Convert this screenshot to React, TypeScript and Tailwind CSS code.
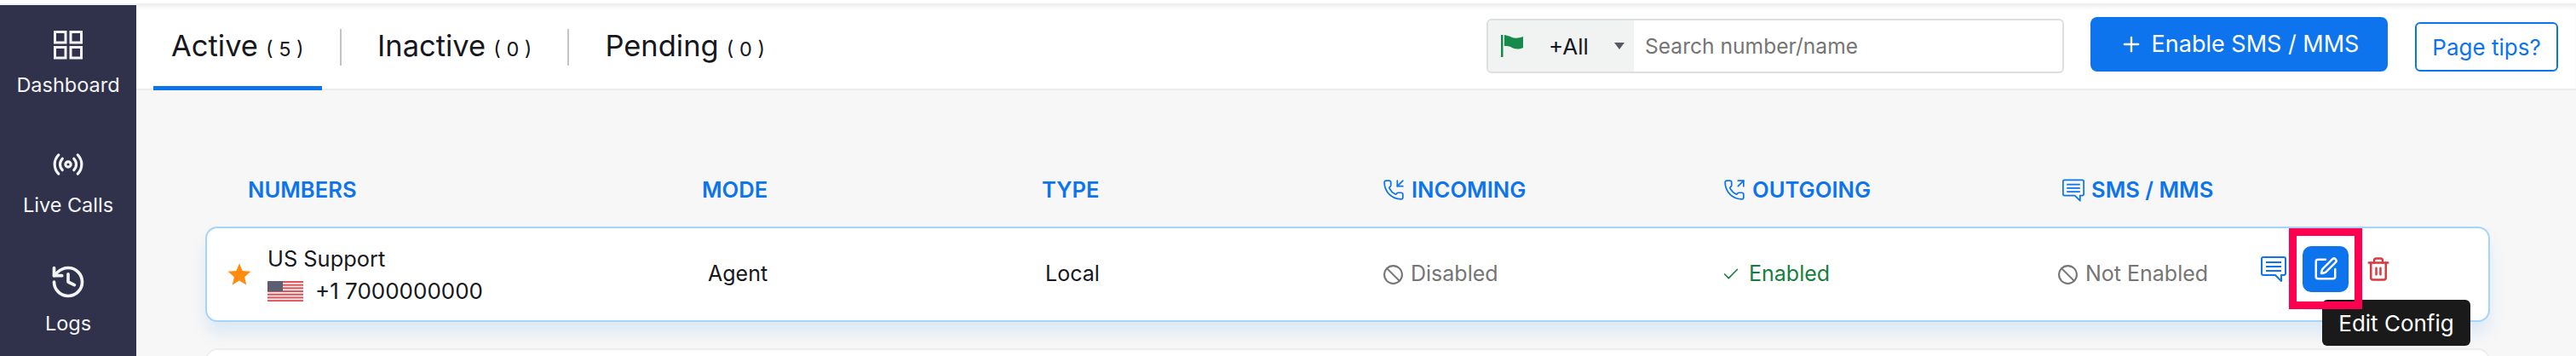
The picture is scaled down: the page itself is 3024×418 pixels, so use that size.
import { Ban, Check, History, PhoneIncoming, PhoneOutgoing, Plus, Radio, SquarePen, Trash2 } from "lucide-react";

function GridIcon() {
  return (
    <svg width="34" height="34" viewBox="0 0 34 34" fill="none" stroke="currentColor" strokeWidth="3">
      <rect x="1.5" y="1.5" width="12.5" height="12.5" />
      <rect x="20" y="1.5" width="12.5" height="12.5" />
      <rect x="1.5" y="19.5" width="12.5" height="12.5" />
      <rect x="20" y="19.5" width="12.5" height="12.5" />
    </svg>
  );
}

function ChatIcon({ className }: { className?: string }) {
  return (
    <svg className={className} viewBox="0 0 30 30" fill="none" stroke="currentColor" strokeWidth="2" strokeLinejoin="round">
      <path d="M3 1h24a2 2 0 0 1 2 2v17a2 2 0 0 1-2 2h-3v7l-7-7H3a2 2 0 0 1-2-2V3a2 2 0 0 1 2-2Z" />
      <path d="M6 7h18M6 12h18M6 17h18" />
    </svg>
  );
}

function GreenFlag() {
  return (
    <svg width="26" height="26" viewBox="0 0 26 26" fill="#168a4b">
      <rect x="0" y="0" width="2.5" height="26" />
      <path d="M4 0c3 1 6 1 9 3 3 1 8 1 13-1v13c-5 2-9 2-13 0-3-2-6-2-9-2Z" />
    </svg>
  );
}

function UsFlag() {
  const stripes = [0, 1, 2, 3, 4, 5, 6];
  return (
    <svg width="42" height="24" viewBox="0 0 42 24">
      <rect width="42" height="24" fill="#f1eeee" />
      {stripes.map((i) => (
        <rect key={i} y={i * 3.7} width="42" height="1.9" fill="#dc4f55" />
      ))}
      <rect width="18" height="12" fill="#5d5f70" />
    </svg>
  );
}

function NavItem({ icon, label, className }: { icon: React.ReactNode; label: string; className: string }) {
  return (
    <div className={`flex flex-col items-center ${className}`}>
      {icon}
      <span className="text-[23.5px] leading-[28px] text-[#f4f4f6]">{label}</span>
    </div>
  );
}

function Tab({ label, count }: { label: string; count: number }) {
  return (
    <span className="flex items-baseline gap-[9px] text-[#16181d]">
      <span className="text-[34.5px] leading-[40px]">{label}</span>
      <span className="text-[23.5px] leading-[40px] whitespace-pre">{`( ${count} )`}</span>
    </span>
  );
}

function HeadLabel({ icon, label, className }: { icon?: React.ReactNode; label: string; className?: string }) {
  return (
    <div className={`flex items-center gap-[8px] ${className}`}>
      {icon}
      <span className="text-[25.6px] leading-[30px] font-semibold text-[#0d74ed]">{label}</span>
    </div>
  );
}

export default function App() {
  return (
    <div className="h-[418px] w-[3024px] overflow-hidden bg-white pt-[4px] font-[Inter,sans-serif]">
      <div className="flex h-[414px] bg-white shadow-[inset_0_6px_6px_-3px_rgba(0,0,0,0.09)]">
        <aside className="mt-[2px] flex h-[412px] w-[160px] shrink-0 flex-col bg-[#30324b] text-[#f4f4f6]">
          <NavItem className="mt-[30px] gap-[16px]" icon={<GridIcon />} label="Dashboard" />
          <NavItem className="mt-[60px] gap-[15px]" icon={<Radio size={38} strokeWidth={2} />} label="Live Calls" />
          <NavItem className="mt-[54px] gap-[13px]" icon={<History size={44} strokeWidth={2} />} label="Logs" />
        </aside>

        <main className="flex min-w-0 flex-1 flex-col">
          <header className="flex h-[102px] shrink-0 border-b-2 border-[#ebebeb] pl-[20px] pr-[21px]">
            <div className="-mb-[3px] h-[103px] w-[198px] border-b-[6px] border-[#0d74ed] pl-[21px] pt-[30px]">
              <Tab label="Active" count={5} />
            </div>
            <div className="ml-[21px] mt-[30px] h-[43px] w-[2px] bg-[#c4c4c4]" />
            <div className="ml-[42px] pt-[30px]">
              <Tab label="Inactive" count={0} />
            </div>
            <div className="ml-[42px] mt-[30px] h-[43px] w-[2px] bg-[#c4c4c4]" />
            <div className="ml-[42px] pt-[30px]">
              <Tab label="Pending" count={0} />
            </div>

            <div className="ml-auto mt-[18px] flex h-[64px] w-[678px] overflow-hidden rounded-[6px] border-2 border-[#dedede]">
              <div className="flex w-[171px] shrink-0 items-center bg-[#f1f3f3] pl-[15px]">
                <GreenFlag />
                <span className="ml-[30px] text-[26px] text-[#16181d]">+All</span>
                <span className="ml-[30px] h-0 w-0 border-x-[6px] border-t-[8px] border-x-transparent border-t-[#555a62]" />
              </div>
              <span className="flex items-center pl-[13px] text-[24.6px] text-[#757575]">Search number/name</span>
            </div>

            <button className="ml-[31px] mt-[16px] flex h-[64px] w-[349px] items-center justify-center gap-[10px] rounded-[8px] bg-[#0d74ed] text-[27px] text-white">
              <Plus size={28} strokeWidth={2} />
              Enable SMS / MMS
            </button>
            <button className="ml-[32px] mt-[22px] h-[58px] w-[168px] rounded-[6px] border-2 border-[#0d74ed] bg-white text-[26px] text-[#0d74ed]">
              Page tips?
            </button>
          </header>

          <section className="flex-1 bg-[#f7f7f7]">
            <div className="mt-[102px] flex h-[30px] items-center pl-[131px]">
              <HeadLabel className="w-[533px]" label="NUMBERS" />
              <HeadLabel className="w-[399px]" label="MODE" />
              <HeadLabel className="w-[400px]" label="TYPE" />
              <HeadLabel className="w-[400px]" icon={<PhoneIncoming size={26} strokeWidth={1.6} className="text-[#0d74ed]" />} label="INCOMING" />
              <HeadLabel className="w-[398px]" icon={<PhoneOutgoing size={26} strokeWidth={1.6} className="text-[#0d74ed]" />} label="OUTGOING" />
              <HeadLabel icon={<ChatIcon className="h-[27px] w-[26px] text-[#0d74ed]" />} label="SMS / MMS" />
            </div>

            <div className="ml-[81px] mt-[28px] flex h-[112px] w-[2682px] items-center rounded-[14px] border-2 border-[#a4d5fc] bg-white pl-[24px] shadow-[0_14px_18px_rgba(13,116,237,0.1)]">
              <svg className="h-[28px] w-[28px] shrink-0 text-[#ff8c0c]" viewBox="0 0 24 24" fill="currentColor">
                <path d="M12 1l3.2 7.6 8.3.7-6.3 5.4 1.9 8.1L12 18.5l-7.1 4.3 1.9-8.1L.5 9.3l8.3-.7Z" />
              </svg>
              <div className="ml-[19px] mt-[2px] w-[517px] shrink-0">
                <div className="text-[25.4px] leading-[32px] text-[#16181d]">US Support</div>
                <div className="mt-[6px] flex items-center gap-[14px] text-[26px] leading-[32px] text-[#16181d]">
                  <UsFlag />
                  +1 7000000000
                </div>
              </div>
              <span className="w-[396px] shrink-0 text-[25px] text-[#16181d]">Agent</span>
              <span className="w-[396px] shrink-0 text-[25px] text-[#16181d]">Local</span>
              <div className="flex w-[398px] shrink-0 items-center gap-[8px] text-[25px] text-[#757575]">
                <Ban size={25} strokeWidth={2} />
                Disabled
              </div>
              <div className="flex w-[394px] shrink-0 items-center gap-[10px] text-[25px] text-[#15803d]">
                <Check size={22} strokeWidth={1.8} />
                Enabled
              </div>
              <div className="flex w-[239px] shrink-0 items-center gap-[8px] text-[25px] text-[#757575]">
                <Ban size={25} strokeWidth={2} />
                Not Enabled
              </div>
              <div className="-mt-[12px] flex items-center">
                <ChatIcon className="h-[30px] w-[30px] text-[#0d74ed]" />
                <div className="relative ml-[19px] flex h-[54px] w-[54px] items-center justify-center rounded-[10px] bg-[#0d74ed] text-white">
                  <SquarePen size={30} strokeWidth={2} />
                  <div className="absolute left-[23px] top-[63px] z-10 flex h-[54px] w-[174px] items-center justify-center rounded-[6px] bg-[#1a1a1a] text-[26px] text-white">
                    Edit Config
                  </div>
                  <div className="absolute -bottom-[20px] -left-[16px] -right-[16px] -top-[21px] z-20 border-[9px] border-[#ff0050]" />
                </div>
                <Trash2 size={30} strokeWidth={2} className="ml-[20px] text-[#d93a3f]" />
              </div>
            </div>

            <div className="ml-[81px] mt-[31px] h-[40px] w-[2682px] rounded-[14px] border-2 border-[#eeeeee] bg-white" />
          </section>
        </main>
      </div>
    </div>
  );
}
